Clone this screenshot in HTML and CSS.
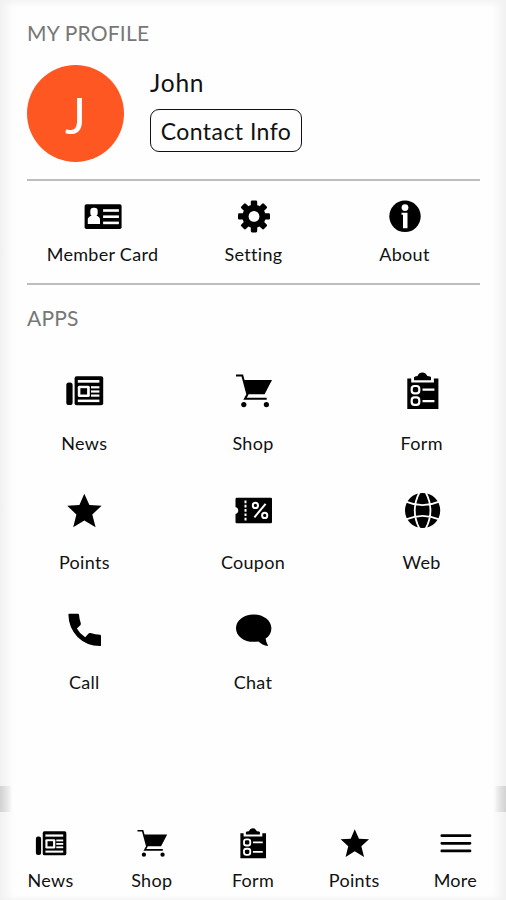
FILE: index.html
```html
<!DOCTYPE html>
<html lang="en">
<head>
<meta charset="utf-8">
<title>My Profile</title>
<link rel="stylesheet" href="styles.css">
</head>
<body>
<svg class="sprite" aria-hidden="true">
  <symbol id="news" viewBox="0 0 40 40">
    <rect x="2.3" y="11.5" width="6.3" height="22.5" rx="2.6"/>
    <rect x="10.6" y="5.3" width="28.6" height="29" rx="2"/>
    <g fill="#fff"><rect x="13.8" y="9" width="21.6" height="2.7"/><rect x="13.8" y="14.7" width="12" height="11.3" rx="1.5"/><rect x="27" y="15.2" width="8.4" height="2.2"/><rect x="27" y="19.4" width="8.4" height="2.2"/><rect x="27" y="23.5" width="8.4" height="2.2"/><rect x="13.8" y="28.6" width="21.6" height="2.5"/></g>
    <rect x="16.4" y="17.2" width="6.7" height="6.3"/>
  </symbol>
  <symbol id="shop" viewBox="0 0 40 40">
    <path d="M11 9H39L31.6 23.3H14.6Z"/>
    <path d="M3 4.5H9.3L14.4 23.5L12 27.8H33.7" fill="none" stroke="#000" stroke-width="2"/>
    <circle cx="10.8" cy="33.6" r="2.6"/><circle cx="33.4" cy="33.6" r="2.6"/>
  </symbol>
  <symbol id="form" viewBox="0 0 40 40">
    <path d="M5.3 7.6H9.2V11.5H31.9V7.6H36.4V38H5.3Z"/>
    <path d="M12 9.2V6.5Q12.3 5 15.5 5Q17 1.6 20.3 1.6T25.3 5Q28.8 5 29 6.5V9.2Z"/>
    <g fill="none" stroke="#fff" stroke-width="2.2"><rect x="9.7" y="15" width="7.6" height="7.4" rx="2.8"/><rect x="9.7" y="26.4" width="7.6" height="7.4" rx="2.8"/><path d="M20.5 18.7H32.4M20.5 30.1H32.4"/></g>
  </symbol>
  <symbol id="points" viewBox="0 0 40 40"><path d="M20.3 2.8L25.4 14.1L37.6 14.8L28.3 23.4L31.6 36.3L20.3 29.5L9.2 36.3L12.4 23.4L3.2 14.8L15.4 14.1Z"/></symbol>
  <symbol id="coupon" viewBox="0 0 40 40">
    <path d="M3.8 6.8H37.8Q39 6.8 39 8V31Q39 32.2 37.8 32.2H3.8Q2.5 32.2 2.5 31V23A3.6 3.6 0 0 0 2.5 16V8Q2.5 6.8 3.8 6.8Z"/>
    <g fill="none" stroke="#fff" stroke-width="2"><path d="M12.5 9.5V30" stroke-dasharray="2.7 1.6"/><path d="M32.6 12.8L21.4 26.3"/><circle cx="22.4" cy="14.4" r="2.6"/><circle cx="31.7" cy="24.4" r="2.6"/></g>
  </symbol>
  <symbol id="web" viewBox="0 0 40 40">
    <circle cx="20.6" cy="19.5" r="17.6"/>
    <g fill="none" stroke="#fff" stroke-width="1.8"><path d="M4 10.6Q20.6 17.8 37.2 10.6M4 28.4Q20.6 21.2 37.2 28.4M17.4 1.5Q8.1 19.5 17.4 37.5M23.8 1.5Q33.1 19.5 23.8 37.5"/></g>
  </symbol>
  <symbol id="call" viewBox="0 0 40 40"><path d="M4.4 4.6Q4.4 3.8 5.2 3.8H14Q14.9 3.8 15 4.8Q15.3 9 16.8 13.2Q17.1 14.4 16.3 15.2L12.9 18.5Q15.8 24 21.2 27.2L24.6 23.5Q25.4 22.7 26.6 23.1Q31 24.6 36 24.8Q37 24.9 37 25.9V35.2Q37 36.1 36.1 36.1Q22.6 35.9 13.5 26.9Q4.6 17.7 4.4 4.6Z"/></symbol>
  <symbol id="chat" viewBox="0 0 40 40"><path d="M20.7 4.4C30.6 4.4 38.4 10.4 38.4 18.2C38.4 22.7 36.2 26.3 32.6 28.6Q33 32.4 35.2 36Q29 34.9 25.4 31.4C13.5 33.6 3 27.4 3 18.2C3 10.4 10.8 4.4 20.7 4.4Z"/></symbol>
  <symbol id="card" viewBox="0 0 40 40">
    <rect x="1.6" y="8.3" width="37" height="24.7" rx="1.8"/>
    <g fill="#fff"><rect x="7.3" y="11.8" width="7.4" height="8.4" rx="3.3"/><path d="M4.8 27.9V23.6Q4.8 20.8 8.8 19.5H13.2Q17 20.8 17 23.6V27.9Z"/><rect x="20.1" y="13.2" width="15.8" height="2.6"/><rect x="20.1" y="19.4" width="15.8" height="2.6"/><rect x="20.1" y="25.6" width="15.8" height="2.6"/></g>
  </symbol>
  <symbol id="setting" viewBox="0 0 40 40">
    <circle cx="20" cy="20.4" r="11.6"/>
    <g transform="translate(20 20.4)">
      <rect x="-3.2" y="-16" width="6.4" height="32" rx="1.3"/>
      <rect x="-3.2" y="-16" width="6.4" height="32" rx="1.3" transform="rotate(45)"/>
      <rect x="-3.2" y="-16" width="6.4" height="32" rx="1.3" transform="rotate(90)"/>
      <rect x="-3.2" y="-16" width="6.4" height="32" rx="1.3" transform="rotate(135)"/>
    </g>
    <circle cx="20" cy="20.4" r="5.4" fill="#fff"/>
  </symbol>
  <symbol id="about" viewBox="0 0 40 40">
    <circle cx="20" cy="20.3" r="15.7"/>
    <g fill="#fff"><circle cx="20" cy="11.6" r="3.4"/><path d="M16.5 16.7H22.5V32.2H18V18.7H16.5Z"/></g>
  </symbol>
  <symbol id="more" viewBox="0 0 40 40"><path d="M3.4 10.5H37.6M3.4 19.8H37.6M3.4 29H37.6" fill="none" stroke="#000" stroke-width="3.3" stroke-linecap="round"/></symbol>
</svg>
<div class="screen">
  <main>
    <section class="profile">
      <h2 class="heading">MY PROFILE</h2>
      <div class="person">
        <div class="avatar">J</div>
        <div class="details">
          <div class="name">John</div>
          <button class="contact">Contact Info</button>
        </div>
      </div>
      <div class="links">
        <div class="item"><svg><use href="#card"/></svg><span>Member Card</span></div>
        <div class="item"><svg><use href="#setting"/></svg><span>Setting</span></div>
        <div class="item"><svg><use href="#about"/></svg><span>About</span></div>
      </div>
      <h2 class="heading">APPS</h2>
    </section>
    <section class="apps">
      <div class="item"><svg><use href="#news"/></svg><span>News</span></div>
      <div class="item"><svg><use href="#shop"/></svg><span>Shop</span></div>
      <div class="item"><svg><use href="#form"/></svg><span>Form</span></div>
      <div class="item"><svg><use href="#points"/></svg><span>Points</span></div>
      <div class="item"><svg><use href="#coupon"/></svg><span>Coupon</span></div>
      <div class="item"><svg><use href="#web"/></svg><span>Web</span></div>
      <div class="item"><svg><use href="#call"/></svg><span>Call</span></div>
      <div class="item"><svg><use href="#chat"/></svg><span>Chat</span></div>
    </section>
  </main>
  <nav class="tabs">
    <div class="item"><svg><use href="#news"/></svg><span>News</span></div>
    <div class="item"><svg><use href="#shop"/></svg><span>Shop</span></div>
    <div class="item"><svg><use href="#form"/></svg><span>Form</span></div>
    <div class="item"><svg><use href="#points"/></svg><span>Points</span></div>
    <div class="item"><svg><use href="#more"/></svg><span>More</span></div>
  </nav>
</div>
</body>
</html>
```
FILE: styles.css
```css
* { box-sizing: border-box; }
body { margin: 0; font-family: Lato, "Liberation Sans", sans-serif; color: #111; }
.sprite { position: absolute; width: 0; height: 0; }
.screen {
  width: 506px;
  height: 900px;
  display: flex;
  flex-direction: column;
  overflow: hidden;
  background:
    linear-gradient(90deg, #d2d2d2, #e0e0e0 5px, rgba(255,255,255,0) 12px) 0 786px / 12px 26px no-repeat,
    linear-gradient(270deg, #d2d2d2, #e0e0e0 5px, rgba(255,255,255,0) 12px) 494px 786px / 12px 26px no-repeat,
    linear-gradient(90deg, #f1f1f1, rgba(255,255,255,0) 14px),
    linear-gradient(270deg, #f1f1f1, rgba(255,255,255,0) 14px),
    linear-gradient(180deg, #f5f5f5, rgba(255,255,255,0) 8px),
    linear-gradient(0deg, #f5f5f5, rgba(255,255,255,0) 5px),
    #fefefe;
}
main { flex: 1; }
.profile { padding: 20px 26px 0 27px; }
.heading { margin: 0; font-size: 21px; font-weight: 400; line-height: 26px; letter-spacing: .2px; color: #777; }
.person { display: flex; gap: 26px; margin-top: 19px; height: 114px; }
.avatar {
  width: 97px;
  height: 97px;
  border-radius: 50%;
  background: #ff5722;
  color: #fff;
  font-size: 50px;
  line-height: 100px;
  text-align: center;
}
.details { display: flex; flex-direction: column; align-items: flex-start; }
.name { font-size: 24.5px; line-height: 30px; margin-top: 3px; letter-spacing: .8px; }
.contact {
  margin-top: 11px;
  width: 152px;
  height: 43px;
  padding: 0;
  border: 1.5px solid #111;
  border-radius: 9px;
  background: none;
  color: inherit;
  font: 23px/38px Lato, "Liberation Sans", sans-serif;
  letter-spacing: .45px;
}
.links {
  display: grid;
  grid-template-columns: repeat(3, 1fr);
  height: 106px;
  margin-bottom: 20px;
  padding-top: 15px;
  border-top: 2px solid #bdbdbd;
  border-bottom: 2px solid #bdbdbd;
}
.item { display: flex; flex-direction: column; align-items: center; font-size: 18px; line-height: 22px; letter-spacing: .3px; white-space: nowrap; }
.item svg { width: 40px; height: 40px; flex: none; overflow: visible; }
.links .item { gap: 7px; }
.apps { display: grid; grid-template-columns: repeat(3, 1fr); grid-auto-rows: 119.5px; padding-top: 40px; }
.apps .item { gap: 20.6px; }
.tabs { display: grid; grid-template-columns: repeat(5, 1fr); height: 73px; }
.tabs .item { gap: 9.4px; }
.tabs svg { width: 33px; height: 33px; }
```
